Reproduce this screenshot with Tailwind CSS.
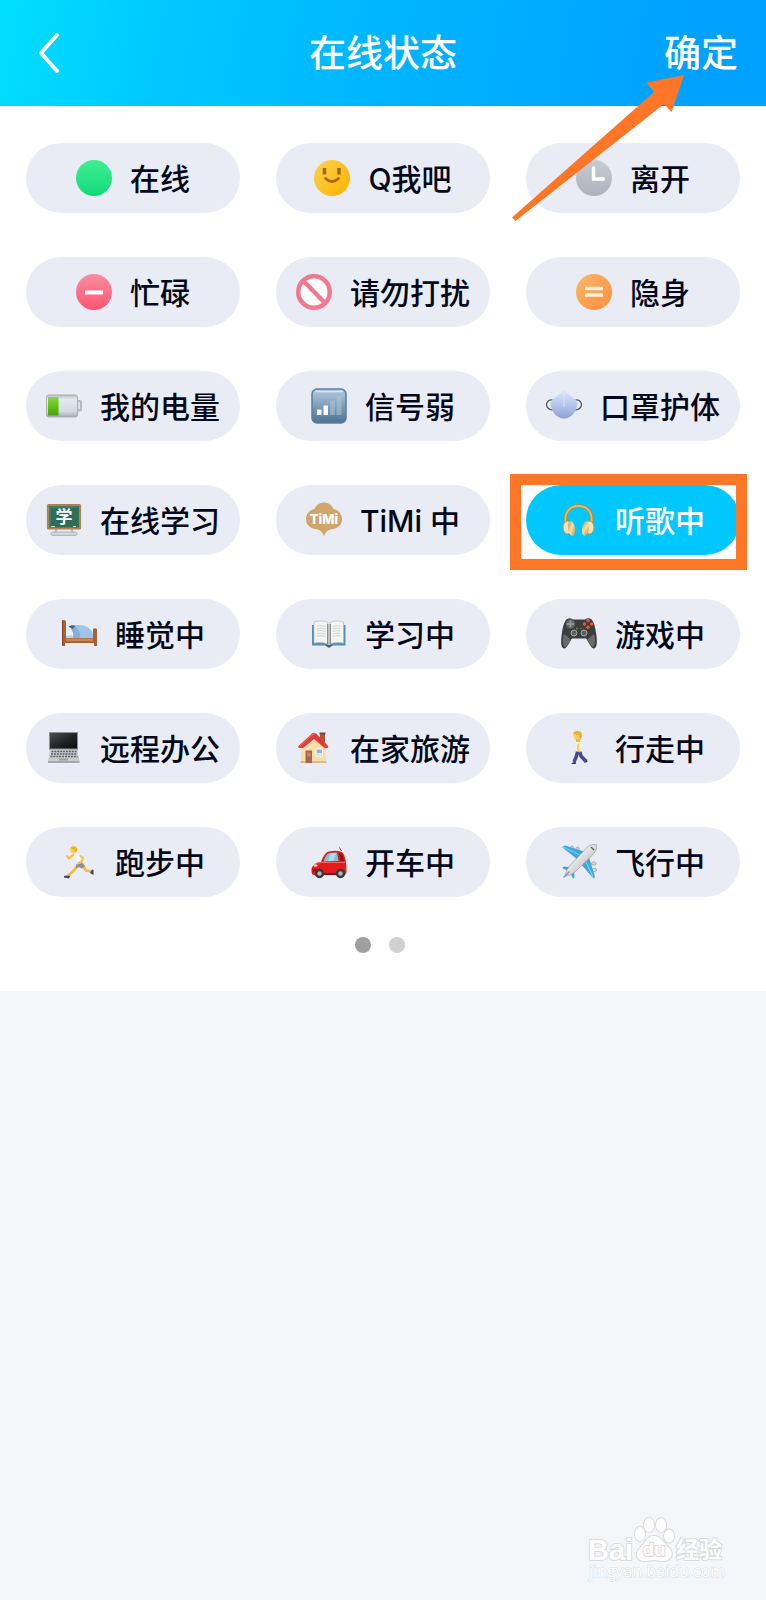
<!DOCTYPE html>
<html lang="zh-CN">
<head>
    <meta charset="UTF-8">
    <meta name="viewport" content="width=device-width, initial-scale=1.0">
    <title>在线状态</title>
    <script src="https://cdn.jsdelivr.net/npm/@tailwindcss/browser@4"></script>
</head>
<body class="relative min-h-screen bg-[#f4f6fa] font-['Inter','Noto_Sans_CJK_SC',sans-serif] text-[#03081a]">
    <header class="grid h-[106px] grid-cols-3 items-center bg-linear-[100deg,#00dfff_0%,#00c8ff_22%,#00b4ff_52%,#00a1ff_90%] px-7 text-[37px] leading-none font-medium text-white">
        <button type="button" aria-label="返回" class="justify-self-start p-2">
            <svg class="h-10 w-6" viewBox="0 0 24 40" fill="none" stroke="#fff" stroke-width="4" stroke-linecap="round" stroke-linejoin="round"><path d="M21 2 5 20l16 18"/></svg>
        </button>
        <h1 class="justify-self-center whitespace-nowrap">在线状态</h1>
        <button type="button" class="justify-self-end whitespace-nowrap">确定</button>
    </header>

    <main class="bg-white px-[26px] pt-[37px] pb-[38px]">
        <div class="grid grid-cols-3 gap-x-9 gap-y-11 text-[30px] leading-none font-medium whitespace-nowrap [&_span]:pt-0.5">
            <button type="button" class="flex h-[70px] items-center justify-center gap-[18px] rounded-full bg-[#e9ecf4]">
                <svg class="size-9 shrink-0" viewBox="0 0 36 36"><defs><linearGradient id="green" x2="0" y2="1"><stop stop-color="#3df090"/><stop offset="1" stop-color="#12d97c"/></linearGradient></defs><circle cx="18" cy="18" r="18" fill="url(#green)"/></svg>
                <span>在线</span>
            </button>
            <button type="button" class="flex h-[70px] items-center justify-center gap-[18px] rounded-full bg-[#e9ecf4]">
                <svg class="size-9 shrink-0" viewBox="0 0 36 36"><defs><linearGradient id="yellow" x2="1" y2="1"><stop stop-color="#ffd24d"/><stop offset="1" stop-color="#fbb200"/></linearGradient></defs><circle cx="18" cy="18" r="18" fill="url(#yellow)"/><g stroke="#a46a08" fill="none"><path d="M10.500 8v6.500M25 8v6.500" stroke-width="3.600"/><path d="M11.500 18.500q6.500 6 13 0" stroke-width="2.800" stroke-linecap="round"/></g></svg>
                <span>Q我吧</span>
            </button>
            <button type="button" class="flex h-[70px] items-center justify-center gap-[18px] rounded-full bg-[#e9ecf4]">
                <svg class="size-9 shrink-0" viewBox="0 0 36 36"><defs><linearGradient id="grey" x2="0" y2="1"><stop stop-color="#c9cbd3"/><stop offset="1" stop-color="#aeb0bb"/></linearGradient></defs><circle cx="18" cy="18" r="18" fill="url(#grey)"/><path d="M17.500 8v11h10" fill="none" stroke="#fff" stroke-width="3.500" stroke-linecap="round"/></svg>
                <span>离开</span>
            </button>

            <button type="button" class="flex h-[70px] items-center justify-center gap-[18px] rounded-full bg-[#e9ecf4]">
                <svg class="size-9 shrink-0" viewBox="0 0 36 36"><defs><linearGradient id="pink" x2="0" y2="1"><stop stop-color="#f98da0"/><stop offset="1" stop-color="#ff5470"/></linearGradient></defs><circle cx="18" cy="18" r="18" fill="url(#pink)"/><path d="M9 18.500h18" stroke="#fff" stroke-width="4"/></svg>
                <span>忙碌</span>
            </button>
            <button type="button" class="flex h-[70px] items-center justify-center gap-[18px] rounded-full bg-[#e9ecf4]">
                <svg class="size-9 shrink-0" viewBox="0 0 36 36"><g fill="#fff" stroke="#f0798f" stroke-width="4.500"><circle cx="18" cy="18" r="15.750"/><path d="m7 6.500 22.500 23"/></g></svg>
                <span>请勿打扰</span>
            </button>
            <button type="button" class="flex h-[70px] items-center justify-center gap-[18px] rounded-full bg-[#e9ecf4]">
                <svg class="size-9 shrink-0" viewBox="0 0 36 36"><defs><linearGradient id="orange" x2="1" y2="1"><stop stop-color="#fbb76c"/><stop offset="1" stop-color="#ff8d3c"/></linearGradient></defs><circle cx="18" cy="18" r="18" fill="url(#orange)"/><path d="M9 14.500h18M9 21h18" stroke="#fff1dc" stroke-width="3.500"/></svg>
                <span>隐身</span>
            </button>

            <button type="button" class="flex h-[70px] items-center justify-center gap-[18px] rounded-full bg-[#e9ecf4]">
                <svg class="size-9 shrink-0" viewBox="0 0 36 36">
                    <defs>
                        <linearGradient id="cell" x2="0" y2="1"><stop stop-color="#b9bfc4"/><stop offset=".2" stop-color="#e4eaee"/><stop offset=".75" stop-color="#d2dade"/><stop offset="1" stop-color="#a5abb0"/></linearGradient>
                        <linearGradient id="charge" x2="0" y2="1"><stop stop-color="#8ed24a"/><stop offset=".5" stop-color="#5fc412"/><stop offset="1" stop-color="#4da00f"/></linearGradient>
                    </defs>
                    <rect x="30" y="12" width="6" height="11.500" rx="2" fill="#b4babf"/><rect x="31" y="14" width="3" height="7" fill="#dce1e4"/>
                    <rect x=".5" y="7" width="31" height="22" rx="2" fill="url(#cell)" stroke="#a9afb5"/>
                    <rect x="2" y="9" width="10.500" height="18.500" fill="url(#charge)"/>
                </svg>
                <span>我的电量</span>
            </button>
            <button type="button" class="flex h-[70px] items-center justify-center gap-[18px] rounded-full bg-[#e9ecf4]">
                <svg class="size-9 shrink-0" viewBox="0 0 36 36">
                    <defs><linearGradient id="signal" x2="0" y2="1"><stop stop-color="#b3cbdf"/><stop offset=".45" stop-color="#83a2bd"/><stop offset="1" stop-color="#4d7293"/></linearGradient></defs>
                    <rect x="1" y="1" width="34" height="34" rx="5" fill="url(#signal)" stroke="#5b7f9e" stroke-width="1.500"/>
                    <path d="M5 3.500h26" stroke="#d5e3ef" stroke-width="1.500" stroke-linecap="round"/>
                    <path d="M6 21.500h4.500V27H6zM12.500 17.500H17V27h-4.500z" fill="#fff"/><path d="M19 12.500h5V27h-5zM25.500 8h5v19h-5z" fill="#b8cada" fill-opacity=".5"/>
                </svg>
                <span>信号弱</span>
            </button>
            <button type="button" class="flex h-[70px] items-center justify-center gap-[18px] rounded-full bg-[#e9ecf4]">
                <svg class="size-9 shrink-0" viewBox="0 0 36 36">
                    <defs><linearGradient id="mask" x2="0" y2="1"><stop stop-color="#d9e5fb"/><stop offset=".55" stop-color="#b2c3ea"/><stop offset="1" stop-color="#8da0d2"/></linearGradient></defs>
                    <g fill="none" stroke="#56575e" stroke-width="1.300"><path d="M7 12C1 11-1 17 2 20c2 2 5 2 7 1M29 12c6-1 8 5 5 8-2 2-5 2-7 1"/></g>
                    <path d="M18 3c3 1 7 5 11 8 2 1.500 2.500 2.500 2.300 4.500-.3 6-3.300 11-7.800 13.500-3.500 2-7.500 2-11 0C8 26.500 5 21.500 4.700 15.500 4.500 13.500 5 12.500 7 11c4-3 8-7 11-8z" fill="url(#mask)"/>
                    <path d="M18 5v14" stroke="#e8f0ff" stroke-opacity=".7"/>
                </svg>
                <span>口罩护体</span>
            </button>

            <button type="button" class="flex h-[70px] items-center justify-center gap-[18px] rounded-full bg-[#e9ecf4]">
                <svg class="size-9 shrink-0" viewBox="0 0 36 36">
                    <path d="M11 26 9 31M25 26l2 5" stroke="#b6b9be" stroke-width="2" stroke-linecap="round"/><rect x="5" y="30" width="26" height="3.500" rx="1.700" fill="#d3d6da" stroke="#a8abb0" stroke-width=".8"/>
                    <rect x="2" y="3" width="32" height="23.500" rx=".5" fill="#2c6e57" stroke="#b08056" stroke-width="2.200"/>
                    <path d="M4 25V5h28" fill="none" stroke="#4f8c78" stroke-width="1"/>
                    <path d="M5 24.500h4M27 24.500h3" stroke="#d5dccb" stroke-width="1"/>
                    <text x="18" y="21" text-anchor="middle" font-family="Noto Sans CJK SC" font-size="17" font-weight="700" fill="#fff">学</text>
                </svg>
                <span>在线学习</span>
            </button>
            <button type="button" class="flex h-[70px] items-center justify-center gap-[18px] rounded-full bg-[#e9ecf4]">
                <svg class="size-9 shrink-0" viewBox="0 0 36 36">
                    <path d="M18 .5c5 0 8 3 9.500 6.500 5 1 8.500 5 8.500 10 0 6-4.500 9.500-9.500 10-4 .5-7 2.500-8.500 7.500-1.500-5-4.500-7-8.500-7.500C4.500 26.500 0 23 0 17 0 12 3.500 8 8.500 7 10 3.500 13 .5 18 .5z" fill="#cfa56c"/>
                    <text x="18" y="22" text-anchor="middle" font-family="Inter" font-size="13" font-weight="800" fill="#fff">TiMi</text>
                </svg>
                <span>TiMi 中</span>
            </button>
            <div class="relative">
                <button type="button" aria-pressed="true" class="flex h-[70px] w-full items-center justify-center gap-[18px] rounded-full bg-[#00c8ff] text-white">
                    <svg class="size-9 shrink-0" viewBox="0 0 36 36">
                        <defs><linearGradient id="cup" x2="1" y2="1"><stop stop-color="#c58d25"/><stop offset=".5" stop-color="#f6deb0"/><stop offset="1" stop-color="#c98a1c"/></linearGradient></defs>
                        <path d="M4.500 21C3 9.500 8.500 4 17.500 4S32 9.500 30.500 21" fill="none" stroke="#a98a45" stroke-width="3.500"/>
                        <path d="M4.500 20C3.500 9.500 9 4 17.500 4S31.500 9.500 30.500 20" fill="none" stroke="#e6bd62" stroke-width="1.800"/>
                        <ellipse cx="6.500" cy="25.500" rx="4.500" ry="6.500" fill="#f7e3b9" stroke="#cb9635"/><ellipse cx="28.500" cy="25.500" rx="4.500" ry="6.500" fill="#f7e3b9" stroke="#cb9635"/>
                        <ellipse cx="10.500" cy="26.500" rx="3.500" ry="7.500" transform="rotate(-8 10.500 26.500)" fill="url(#cup)"/><ellipse cx="24.500" cy="26.500" rx="3.500" ry="7.500" transform="rotate(8 24.500 26.500)" fill="url(#cup)"/>
                    </svg>
                    <span>听歌中</span>
                </button>
                <!-- highlight frame -->
                <div class="pointer-events-none absolute -top-[11px] -right-[7px] -bottom-[15px] -left-4 border-[11px] border-[#ff7626]"></div>
            </div>

            <button type="button" class="flex h-[70px] items-center justify-center gap-[18px] rounded-full bg-[#e9ecf4]">
                <svg class="size-9 shrink-0" viewBox="0 0 36 36">
                    <path d="M4 16h9v7H4z" fill="#e9f3f7"/><path d="M4 19.500h10V23H4z" fill="#b9d3df"/>
                    <path d="M8 10.500c6-2 14-2.500 19 1 4 3 6 6.500 6 11.500H12c1-5 0-9-4-12.500z" fill="#9fc4e6"/><path d="M12 10c6 2.500 8 7 7 13h-7c1-5 0-9-4-12.500z" fill="#86b0d8"/><path d="M7.500 10.500c3-1.500 5-1.500 7-.5l-3 3z" fill="#43627e"/>
                    <path d="M1 4q2-.5 4 1v17h27v-9q2-1.500 4 0v17h-3v-3H4v3H1z" fill="#a5633b"/><path d="M5 22.500h27v2.500H5z" fill="#c98558"/><path d="M1.500 5v24" stroke="#7d4322"/>
                </svg>
                <span>睡觉中</span>
            </button>
            <button type="button" class="flex h-[70px] items-center justify-center gap-[18px] rounded-full bg-[#e9ecf4]">
                <svg class="size-9 shrink-0" viewBox="0 0 36 36">
                    <path d="M1 9h33.500v20.500H20l-2 1.500-3-1.500H1z" fill="#4d93b6"/>
                    <path d="M3 6q9-2.500 15 1 6-3.500 14.500-1v21Q23 25.500 18 28.500 12 25.500 3 27z" fill="#f4f4f2" stroke="#b4b7b9" stroke-width=".7"/>
                    <path d="M16 7.500q1.500 0 2 2 .5-2 2-2V28l-2 1.500-2-1.500z" fill="#8d9092"/><path d="M18 9v20" stroke="#eee"/>
                    <path d="M5.500 10q5-1 9 .5m-9 2q5-1 9 .5m-9 2q5-1 9 .5m-9 2q5-1 9 .5m-9 2q5-1 9 .5M21.500 10.500q4-1.500 8-.5m-8 3q4-1.500 8-.5m-8 3q4-1.500 8-.5m-8 3q4-1.500 8-.5m-8 3q4-1.500 8-.5" fill="none" stroke="#c9cbce" stroke-width=".8"/>
                    <path d="M14 29h8l-3 2.500h-2z" fill="#52606a"/>
                </svg>
                <span>学习中</span>
            </button>
            <button type="button" class="flex h-[70px] items-center justify-center gap-[18px] rounded-full bg-[#e9ecf4]">
                <svg class="size-9 shrink-0" viewBox="0 0 36 36">
                    <path d="M6 3q3-1.500 6 .5h12q3-2 6-.5c3 2 4.500 9 5.500 17 .7 6 .5 12-2.500 12.500-3 .5-5.500-7-8-10H11c-2.500 3-5 10.500-8 10-3-.5-3.200-6.500-2.500-12.500C1.500 12 3 5 6 3z" fill="#3a3e3f"/>
                    <path d="M3 18c3 2 5 4 7 6l-5 7c-3 1-4-7-2-13zM33 18c-3 2-5 4-7 6l5 7c3 1 4-7 2-13z" fill="#696b69"/>
                    <circle cx="9.500" cy="8" r="4.700" fill="#5f6465"/><path d="M9.500 4.500v7M6 8h7" stroke="#92979a" stroke-width="2"/>
                    <g fill="#e8572d"><circle cx="27" cy="4.500" r="1.800"/><circle cx="23.500" cy="8" r="1.800"/><circle cx="30.500" cy="8" r="1.800"/><circle cx="27" cy="11.300" r="1.800"/></g>
                    <path d="M15 12.500h1.500M19.500 12.500h1" stroke="#b0782e" stroke-width="1.500"/>
                    <g fill="#5c6162" stroke="#a2a6a6" stroke-width="1"><circle cx="13" cy="17" r="3"/><circle cx="23" cy="17" r="3"/></g>
                </svg>
                <span>游戏中</span>
            </button>

            <button type="button" class="flex h-[70px] items-center justify-center gap-[18px] rounded-full bg-[#e9ecf4]">
                <svg class="size-9 shrink-0" viewBox="0 0 36 36">
                    <defs><linearGradient id="screen" x2="1" y2="1"><stop stop-color="#4a4d4f"/><stop offset=".5" stop-color="#242627"/><stop offset="1" stop-color="#0a0a0a"/></linearGradient></defs>
                    <rect x="3" y="2" width="29" height="18" fill="#8e9194"/><rect x="4" y="3" width="27" height="15.500" fill="url(#screen)"/>
                    <path d="M4 19.500h27.500l2 12H2z" fill="#c9cbce"/><path d="M2 31h31.500v2H2z" fill="#a6a8ac"/>
                    <path d="M5.500 21.500h25M5 24h26M4.500 26.500h27" stroke="#5d5f62" stroke-width="1.300" stroke-dasharray="2 .9"/><path d="M13 29.500h9" stroke="#9c9ea2" stroke-width="2"/>
                </svg>
                <span>远程办公</span>
            </button>
            <button type="button" class="flex h-[70px] items-center justify-center gap-[18px] rounded-full bg-[#e9ecf4]">
                <svg class="size-9 shrink-0" viewBox="0 0 36 36">
                    <path d="M24 3h5v13h-5z" fill="#a35a44"/><path d="M23.500 2.500h6v2h-6z" fill="#7f4434"/>
                    <path d="M5 16 17.500 5 30 16v17H5z" fill="#f7dfac"/><path d="M4.500 31h26v2h-26z" fill="#d9bb8b"/>
                    <path d="M2.500 16 16 3.500q2-1.500 4 0L32 16q1 1.500-1.500 2h-2L18 9 7 18H4q-2.500-.5-1.500-2z" fill="#e23c38"/><path d="m4 16 13-12h2" fill="none" stroke="#f4716a"/>
                    <path d="M9.500 20.500H16V33H9.500z" fill="#a9644e"/><path d="M11 22.500h3.500v4H11z" fill="#c28470"/>
                    <path d="M20 19h6.500v7H20z" fill="#8cb8d6" stroke="#fff" stroke-width="1"/><path d="M20.500 23h5.500v2.500h-5.500z" fill="#dcebf3"/>
                </svg>
                <span>在家旅游</span>
            </button>
            <button type="button" class="flex h-[70px] items-center justify-center gap-[18px] rounded-full bg-[#e9ecf4]">
                <svg class="size-9 shrink-0" viewBox="0 0 36 36">
                    <path d="m17 20-1.500 6-2.500 6M18.500 20l1.500 6 4.500 5" fill="none" stroke="#454a8b" stroke-width="3.500" stroke-linejoin="round"/><path d="M10 34q2-2.500 4.500-2l.5 2zM23 33l3-4 .5 3z" fill="#343765"/>
                    <path d="M15.500 12q2.500-2 5 0l.5 9.500h-6.500z" fill="#f8f2d7"/><path d="M17.500 14q-2 6 1.500 8" fill="none" stroke="#f2c33b" stroke-width="1.500"/>
                    <circle cx="16.500" cy="6" r="4" fill="#fbd06a"/><path d="M12 4q1-3.500 5-3 4 .5 4 4 0 3-2 4.500L17.500 5z" fill="#edb326"/><path d="M15 9h4v3h-4z" fill="#f4bc45"/>
                </svg>
                <span>行走中</span>
            </button>

            <button type="button" class="flex h-[70px] items-center justify-center gap-[18px] rounded-full bg-[#e9ecf4]">
                <svg class="size-9 shrink-0" viewBox="0 0 36 36">
                    <path d="M17 21 12.500 27 7 32M21 20l4 6.500 5 1" fill="none" stroke="#f5b93b" stroke-width="2.800" stroke-linejoin="round"/><path d="M3 32q3-1 6 0l-1 2.500-5-1zM29 29l2-3.500 1.500.5v5z" fill="#334775"/>
                    <path d="m15.500 20 5-2 3.500 4-3 2.500-3-1.500-3 1.500z" fill="#8c8d91"/><path d="m11 10 5-1 4.500 3 1 6.500-5.500 2-1-6z" fill="#f4f4f4"/>
                    <path d="m12 11-4 3.500L6 12M19.500 12l2.500 2-1.500 4-3 1" fill="none" stroke="#f7be46" stroke-width="2.200" stroke-linecap="round" stroke-linejoin="round"/>
                    <circle cx="12.500" cy="6" r="3.300" fill="#fbcc60"/><path d="M9 4.500q2-3 5-2 3 1 2 4.500l-1.500 1.500L13 5.500z" fill="#eeb022"/>
                </svg>
                <span>跑步中</span>
            </button>
            <button type="button" class="flex h-[70px] items-center justify-center gap-[18px] rounded-full bg-[#e9ecf4]">
                <svg class="size-9 shrink-0" viewBox="0 0 36 36">
                    <path d="m30.500 7-2-3.500" stroke="#74423e" stroke-width="1"/>
                    <path d="M10 18c2-6 5-10 8-10.500 5-1 9-1 13 .5 3 2.500 4.500 10.500 4.500 19.500 0 2-1 3.500-3 3.500H3c-2 0-2.500-2-2.500-5 0-4 3-7 9.500-8z" fill="#e01d1a"/>
                    <path d="M12.500 17.500C14.500 12.500 16 9.500 19 9l7-.5 1.500 8.500z" fill="#7fc3da"/><path d="m17 17 3-8h5l-3 8z" fill="#abdceb"/><path d="m28 9 2.500.5q2 3 2.500 7l-3.500.5z" fill="#8c1614"/>
                    <path d="M3 20.500q4-2.500 8-2h23" fill="none" stroke="#ff6058" stroke-width="1"/><path d="M1 25h5l1 2.500H2z" fill="#9d1312"/><ellipse cx="4.500" cy="21.500" rx="2" ry="1.200" fill="#f7cbc2"/>
                    <path d="M11 30h17" stroke="#861311" stroke-width="2"/>
                    <g fill="#b4b8b9" stroke="#35393b" stroke-width="2.500"><circle cx="8.500" cy="29.500" r="3.500"/><circle cx="29.500" cy="29.500" r="3.500"/></g>
                </svg>
                <span>开车中</span>
            </button>
            <button type="button" class="flex h-[70px] items-center justify-center gap-[18px] rounded-full bg-[#e9ecf4]">
                <svg class="size-9 shrink-0" viewBox="0 0 36 36">
                    <defs><linearGradient id="hull" x2="1" y2="1"><stop offset=".2" stop-color="#fff"/><stop offset=".8" stop-color="#b5b9bd"/></linearGradient></defs>
                    <g fill="#d3d7da" stroke="#9ba0a5" stroke-width=".8"><rect x="9.500" y="2" width="3" height="4.500" rx="1.500"/><rect x="15" y="3" width="3" height="4.500" rx="1.500"/><rect x="30.500" y="18" width="4.500" height="3" rx="1.500"/><rect x="31" y="24.500" width="4.500" height="3" rx="1.500"/></g>
                    <path d="M1 3 4 1.500 25 8l-8 8zM27.500 11.500 34 33l-1.500 1.500L19 19z" fill="#3fa7d7"/><path d="m2 3 18 8.500M32 33l-8-17" stroke="#78cdee" stroke-width="1.200"/>
                    <path d="m1 24 2-1.500 8 1-2.500 4zM12 35l1.500-2-.5-8-4 2.500z" fill="#3fa7d7"/>
                    <path d="M35.500.5c1 3-1 7-4 10.500L14 28q-4 3-8 4-2 0-1.500-2Q6 25 8.500 22L25 4.500c3-3 7.500-5 10.500-4z" fill="url(#hull)" stroke="#969ba0" stroke-width=".7"/><path d="m2.500 33.500 6-6" stroke="#8c9196" stroke-width="1.200"/><path d="m30 3 3 3" stroke="#5c6063" stroke-width="1.300"/>
                </svg>
                <span>飞行中</span>
            </button>
        </div>

        <nav aria-label="分页" class="mt-10 flex justify-center gap-[18px] pr-[6px]">
            <button type="button" aria-label="第1页" class="size-4 rounded-full bg-[#a0a0a0]"></button>
            <button type="button" aria-label="第2页" class="size-4 rounded-full bg-[#d0d0d0]"></button>
        </nav>
    </main>

    <!-- arrow pointing at the confirm button -->
    <svg class="pointer-events-none absolute top-[74px] right-[81px] h-[148px] w-[174px]" viewBox="0 0 174 148" fill="#ff7626"><path d="M173 1 135.500 8.500 143 18 1 143.500l3.500 3.500L153 30l7.500 8z"/></svg>

    <!-- watermark -->
    <svg class="pointer-events-none absolute right-9 bottom-3 h-[72px] w-[144px]" viewBox="0 0 144 72" fill="#fff" stroke="#d9dadd" stroke-width="2" paint-order="stroke" font-family="Open Sans, Noto Sans CJK SC, sans-serif">
        <text x="2" y="44" font-family="Liberation Sans" font-size="29" font-weight="700">Bai</text>
        <ellipse cx="54" cy="18" rx="5" ry="7"/><ellipse cx="63" cy="9" rx="5" ry="7"/><ellipse cx="75" cy="9" rx="5" ry="7"/><ellipse cx="83" cy="20" rx="5" ry="6.500"/>
        <path d="M68 20c8 0 9 7 15 12 5 5 3 12-4 13-5 .5-7-1-11-1s-7 1.500-11 1c-7-1-8-8-3-13 6-5 6-12 14-12z"/>
        <text x="68" y="40" font-family="Liberation Sans" font-size="19" font-weight="700" text-anchor="middle">du</text>
        <text x="90" y="42" font-size="23" font-weight="700">经验</text>
        <text x="3" y="61" font-size="16" stroke-width="1">jingyan.baidu.com</text>
    </svg>
</body>
</html>
